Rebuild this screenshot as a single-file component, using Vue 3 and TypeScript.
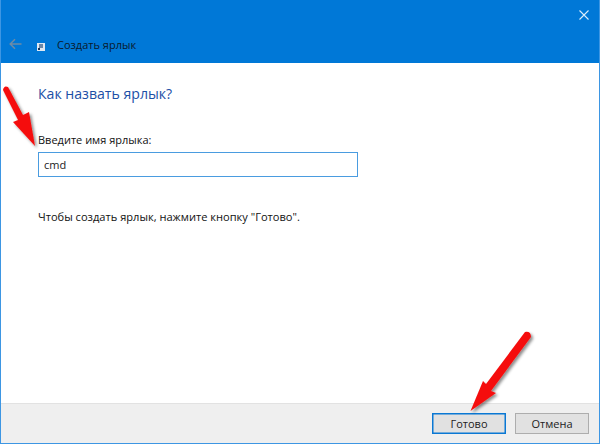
<script setup lang="ts">
const title = "Создать ярлык";
</script>

<template>
  <div class="win">
    <header class="head">
      <div class="close-row">
        <svg width="10" height="10" viewBox="0 0 10 10"><path d="M0.5 0.5L9.5 9.5M9.5 0.5L0.5 9.5" stroke="#dcecfa" stroke-width="1.1" fill="none" /></svg>
      </div>
      <div class="title-row">
        <svg class="back" width="13" height="12" viewBox="0 0 13 12"><path d="M12.5 6H1.5M6 1.2L1.2 6L6 10.8" stroke="#6d8ba6" stroke-width="1.5" fill="none" /></svg>
        <svg class="ico" width="8" height="8" viewBox="0 0 8 8"><rect width="8" height="8" fill="#dfe8f2" /><rect x="2" y="1" width="4" height="4" fill="#6b88a8" /><path d="M1 7L1 5L3 5L3 7Z" fill="#17375c" /></svg>
        <span class="title">{{ title }}</span>
      </div>
    </header>
    <main class="body">
      <h1 class="q">Как назвать ярлык?</h1>
      <label class="lbl">Введите имя ярлыка:</label>
      <div class="inp">cmd</div>
      <p class="hint">Чтобы создать ярлык, нажмите кнопку "Готово".</p>
    </main>
    <footer class="foot">
      <button class="btn primary">Готово</button>
      <button class="btn">Отмена</button>
    </footer>
    <svg class="arrows" width="600" height="444" viewBox="0 0 600 444">
      <defs>
        <filter id="sh" x="-30%" y="-30%" width="160%" height="160%">
          <feDropShadow dx="2" dy="2" stdDeviation="1.5" flood-color="#000" flood-opacity="0.45" />
        </filter>
      </defs>
      <g filter="url(#sh)" fill="#f50d0d">
        <path d="M3 90Q4 85 8 87L23 115L29 112L35 146L13 122L18 120Z" />
        <path d="M525 332Q531 331 531 337L491 391L496 393L470.500 411L483 381L486 384Z" />
      </g>
    </svg>
  </div>
</template>

<style scoped>
.win {
  position: relative;
  width: 600px;
  height: 444px;
  box-sizing: border-box;
  display: flex;
  flex-direction: column;
  background: #fff;
  border-left: 1px solid #3d96e3;
  border-right: 1px solid #3d96e3;
  border-bottom: 1px solid #3d96e3;
  font-family: "Open Sans", "Noto Sans", sans-serif;
  overflow: hidden;
}
.head {
  height: 63px;
  flex: none;
  background: #0078d7;
  display: flex;
  flex-direction: column;
}
.close-row {
  height: 29px;
  display: flex;
  justify-content: flex-end;
  align-items: flex-end;
  padding-right: 10px;
  box-sizing: border-box;
  padding-bottom: 9px;
}
.title-row {
  display: flex;
  align-items: center;
  height: 30px;
  padding-left: 8px;
}
.ico {
  margin-left: 15px;
  margin-top: 5px;
}
.title {
  margin-left: 12px;
  font-size: 11px;
  color: #0a1a2c;
}
.body {
  flex: 1;
  padding: 21px 0 0 37px;
  min-height: 0;
}
.q {
  margin: 0;
  font-weight: 400;
  font-size: 14.100px;
  line-height: 19px;
  color: #1c4fa6;
}
.lbl {
  display: block;
  margin-top: 30px;
  font-size: 11px;
  line-height: 14px;
  color: #111;
}
.inp {
  margin-top: 5px;
  width: 320px;
  height: 25px;
  box-sizing: border-box;
  border: 1px solid #4a9ce0;
  padding-left: 5px;
  font-size: 11px;
  line-height: 24px;
  color: #222;
}
.hint {
  margin: 33px 0 0;
  font-size: 11.100px;
  line-height: 14px;
  color: #111;
}
.foot {
  flex: none;
  height: 40px;
  box-sizing: border-box;
  background: #efefef;
  border-top: 1px solid #e2e2e2;
  display: flex;
  justify-content: flex-end;
  gap: 9px;
  padding: 9px 10px 0 0;
}
.btn {
  width: 74px;
  height: 21px;
  box-sizing: border-box;
  border: 1px solid #adadad;
  background: #e1e1e1;
  font-family: inherit;
  font-size: 11px;
  color: #222;
  padding: 0;
}
.primary {
  border: 1px solid #0a78d4;
  box-shadow: inset 0 0 0 0.500px #0a78d4;
}
.arrows {
  position: absolute;
  left: -1px;
  top: 0;
  pointer-events: none;
}
</style>
